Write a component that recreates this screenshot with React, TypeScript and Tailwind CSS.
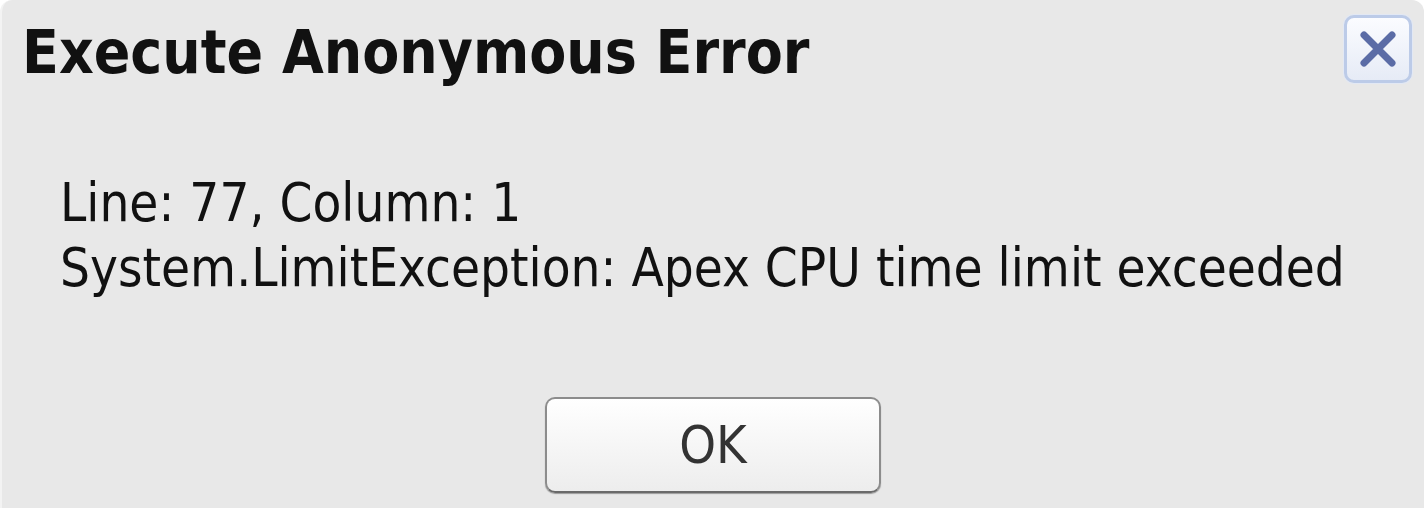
export default function App() {
  return (
    <div className="w-[1424px] h-[508px] bg-white overflow-hidden">
      <div className="h-full rounded-t-[12px] bg-[#e8e8e8] border-l-2 border-[#f3f3f3] flex flex-col font-['DejaVu_Sans_Condensed','DejaVu_Sans',Tahoma,sans-serif]">
        <div className="flex items-start justify-between pl-[20px] pr-[12px] pt-[14px]">
          <h1 className="text-[60px] leading-[76px] font-bold text-[#111] whitespace-nowrap">Execute Anonymous Error</h1>
          <button className="mt-[1px] w-[68px] h-[68px] flex items-center justify-center rounded-[10px] border-[3px] border-[#bccbe8] bg-gradient-to-b from-[#fbfcff] to-[#e6ebf6] shadow-[0_0_0_1px_#e2e8f4]">
            <svg width="44" height="44" viewBox="0 0 44 44">
              <path d="M8 8 L36 36 M36 8 L8 36" stroke="#5b6ca6" strokeWidth="7" strokeLinecap="round" />
            </svg>
          </button>
        </div>
        <div className="pl-[58px] pt-[80px] text-[52.5px] leading-[65px] text-[#111] whitespace-nowrap">
          <p>Line: 77, Column: 1</p>
          <p>System.LimitException: Apex CPU time limit exceeded</p>
        </div>
        <div className="flex justify-center pt-[97px]">
          <button className="w-[336px] h-[96px] rounded-[10px] border-2 border-[#8c8c8c] border-b-[#6a6a6a] bg-gradient-to-b from-white to-[#ededed] text-[52px] text-[#333] shadow-[0_1px_1px_#9a9a9a]">
            OK
          </button>
        </div>
      </div>
    </div>
  );
}
